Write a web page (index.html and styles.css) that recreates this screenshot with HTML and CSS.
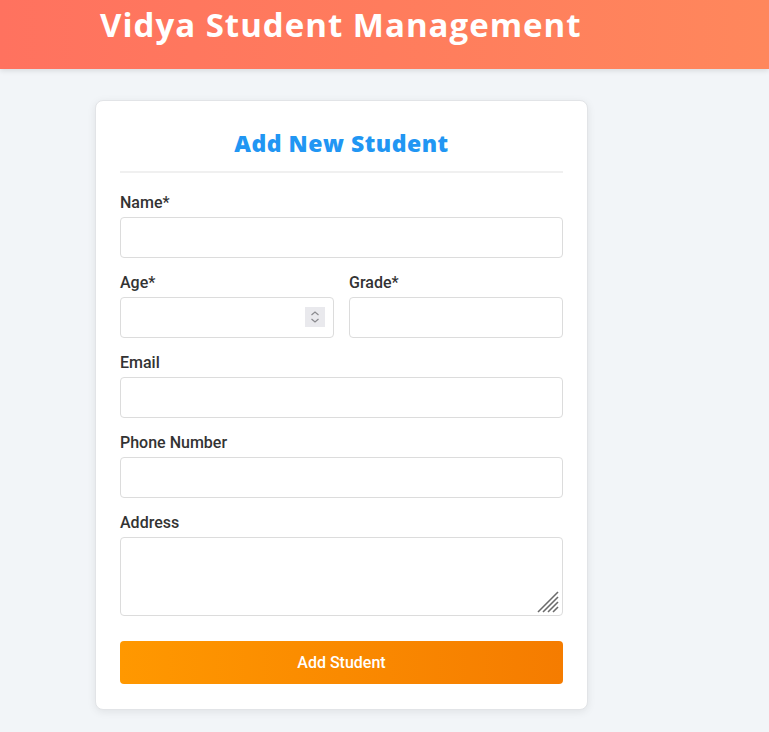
FILE: index.html
```html
<!DOCTYPE html>
<html lang="en">
<head>
<meta charset="UTF-8">
<title>Vidya Student Management</title>
<link rel="stylesheet" href="styles.css">
</head>
<body>
<header class="site-header">
  <h1 class="site-title">Vidya Student Management</h1>
</header>
<main class="main">
  <section class="card">
    <h2 class="card-title">Add New Student</h2>
    <form class="form">
      <div class="form-group">
        <label class="label" for="name">Name*</label>
        <input class="input" id="name" type="text">
      </div>
      <div class="form-row">
        <div class="form-group">
          <label class="label" for="age">Age*</label>
          <div class="field">
            <input class="input number" id="age" type="number">
            <span class="spinner" aria-hidden="true">
              <svg width="20" height="20" viewBox="0 0 20 20"><path d="M6.5 8 L10 5 L13.5 8" fill="none" stroke="#8a8a8e" stroke-width="1.2"/><path d="M6.5 12 L10 15 L13.5 12" fill="none" stroke="#8a8a8e" stroke-width="1.2"/></svg>
            </span>
          </div>
        </div>
        <div class="form-group">
          <label class="label" for="grade">Grade*</label>
          <input class="input" id="grade" type="text">
        </div>
      </div>
      <div class="form-group">
        <label class="label" for="email">Email</label>
        <input class="input" id="email" type="email">
      </div>
      <div class="form-group">
        <label class="label" for="phone">Phone Number</label>
        <input class="input" id="phone" type="tel">
      </div>
      <div class="form-group">
        <label class="label" for="address">Address</label>
        <div class="field">
          <textarea class="input textarea" id="address"></textarea>
          <span class="grip" aria-hidden="true">
            <svg width="24" height="24" viewBox="0 0 24 24"><g stroke="#6b6b6b" stroke-width="1.6"><line x1="2" y1="22" x2="22" y2="2"/><line x1="7" y1="22" x2="22" y2="7"/><line x1="12" y1="22" x2="22" y2="12"/><line x1="17" y1="22" x2="22" y2="17"/></g></svg>
          </span>
        </div>
      </div>
      <button class="btn" type="button">Add Student</button>
    </form>
  </section>
</main>
</body>
</html>
```
FILE: styles.css
```css
* { box-sizing: border-box; }
html, body { margin: 0; padding: 0; }
body {
  background: #f2f5f8;
  font-family: Roboto, "Liberation Sans", sans-serif;
  color: #333;
  height: 732px;
  overflow: hidden;
}
.site-header {
  height: 69px;
  background: linear-gradient(90deg, #ff725f 0%, #ff7c5d 50%, #ff875c 100%);
  box-shadow: 0 2px 5px rgba(0,0,0,0.1);
  padding: 4px 0 0 100px;
}
.site-title {
  margin: 0;
  color: #fff;
  font-family: "Open Sans", sans-serif;
  font-weight: 700;
  font-size: 33px;
  line-height: 42px;
  letter-spacing: 1px;
}
.main {
  padding: 31px 0 0 95px;
}
.card {
  width: 493px;
  background: #fff;
  border: 1px solid #e2e4e7;
  border-radius: 8px;
  box-shadow: 0 2px 8px rgba(0,0,0,0.08);
  padding: 26px 24px 25px;
}
.card-title {
  margin: 0 0 20px;
  padding-bottom: 11px;
  border-bottom: 2px solid #f0f0f0;
  text-align: center;
  color: #2196f3;
  font-family: "Open Sans", sans-serif;
  font-weight: 800;
  font-size: 23px;
  line-height: 33px;
  letter-spacing: 0.5px;
}
.form { display: flex; flex-direction: column; }
.form-group { margin-bottom: 15px; display: flex; flex-direction: column; }
.form-row { display: grid; grid-template-columns: 1fr 1fr; gap: 15px; }
.label {
  font-weight: 500;
  font-size: 16px;
  line-height: 19px;
  margin-bottom: 5px;
  color: #333;
}
.field { position: relative; }
.input {
  display: block;
  width: 100%;
  height: 41px;
  padding: 10px;
  border: 1px solid #dcdcdc;
  border-radius: 4px;
  font-family: Roboto, sans-serif;
  font-size: 16px;
  background: #fff;
}
.number { -moz-appearance: textfield; }
.number::-webkit-inner-spin-button,
.number::-webkit-outer-spin-button { -webkit-appearance: none; margin: 0; }
.spinner {
  position: absolute;
  right: 9px;
  top: 10px;
  width: 20px;
  height: 20px;
  background: #e9e9ed;
  display: block;
}
.spinner svg { display: block; }
.textarea { height: 79px; resize: none; }
.grip {
  position: absolute;
  right: 3px;
  bottom: 2px;
  width: 24px;
  height: 24px;
}
.grip svg { display: block; }
.btn {
  margin-top: 10px;
  height: 43px;
  border: none;
  border-radius: 4px;
  background: linear-gradient(90deg, #ff9800 0%, #f57c00 100%);
  color: #fff;
  font-family: Roboto, sans-serif;
  font-weight: 500;
  font-size: 16px;
  cursor: pointer;
}
```
